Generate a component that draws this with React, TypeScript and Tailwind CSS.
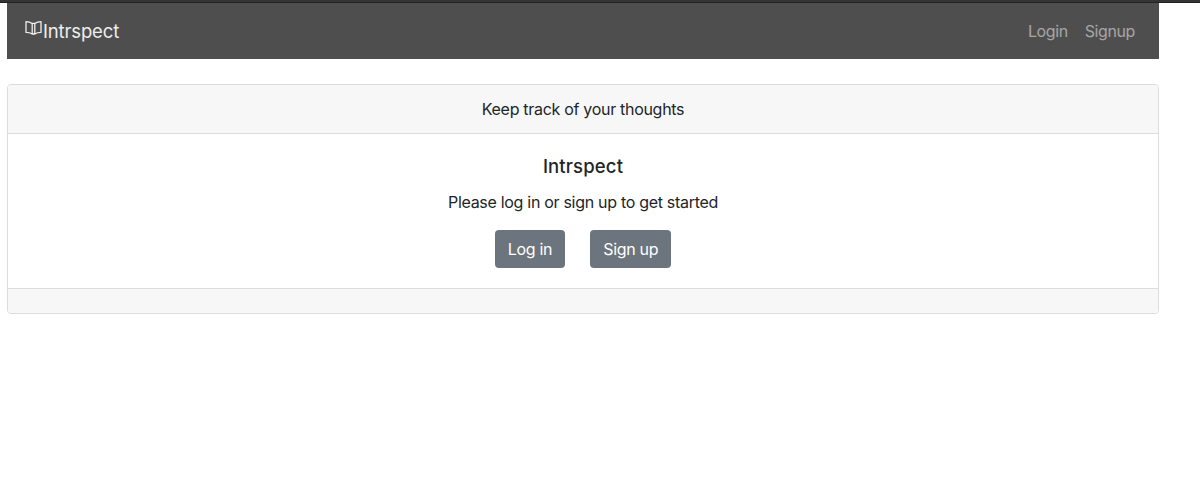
export default function App() {
  return (
    <div className="min-h-[501px] bg-white font-['Inter',sans-serif] text-[16px] leading-[24px] tracking-[-0.3px] text-[#212529]">
      {/* Top edge */}
      <div className="h-[3px] bg-[#343434] border-b border-[#222]" />

      <div className="w-[1152px] ml-[7px]">
        {/* Navbar */}
        <nav className="h-[56px] bg-[#4e4e4e] flex items-center justify-between pl-[18px] pr-[24px]">
          <a className="flex items-center text-[18.5px] tracking-[-0.15px] text-white/90">
            <svg viewBox="0 0 18 16" className="w-[18px] h-[16px] -mt-[6px]" fill="none" stroke="currentColor" strokeWidth="1.3" strokeLinejoin="round">
              <path d="M7.2 3.4C5.6 2.2 3.2 1.6 1 1.6V12.4C3.2 12.4 5.6 12.9 7.2 14H9.8C11.4 12.9 13.8 12.4 16 12.4V1.6C13.8 1.6 11.4 2.2 9.8 3.4Z" />
              <path d="M7.2 3.4V14M9.8 3.4V14" />
            </svg>
            <span>Intrspect</span>
          </a>
          <div className="flex gap-[17px] tracking-[-0.4px] text-white/50">
            <a>Login</a>
            <a>Signup</a>
          </div>
        </nav>

        {/* Card */}
        <div className="mt-[25px] border border-[#dcdcdc] rounded-[4px] overflow-hidden text-center">
          <div className="h-[49px] bg-[#f7f7f7] border-b border-[#dcdcdc] flex items-center justify-center">
            Keep track of your thoughts
          </div>
          <div className="h-[154px] pt-[19px]">
            <h5 className="text-[18.5px] leading-[26px] font-medium tracking-[0.15px]">Intrspect</h5>
            <p className="mt-[11px]">Please log in or sign up to get started</p>
            <div className="mt-[16px] flex justify-center gap-[25px]">
              <button className="h-[38px] px-[13px] rounded-[4px] bg-[#6c757d] text-white">Log in</button>
              <button className="h-[38px] px-[13px] rounded-[4px] bg-[#6c757d] text-white">Sign up</button>
            </div>
          </div>
          <div className="h-[25px] bg-[#f7f7f7] border-t border-[#dcdcdc]" />
        </div>
      </div>
    </div>
  );
}
